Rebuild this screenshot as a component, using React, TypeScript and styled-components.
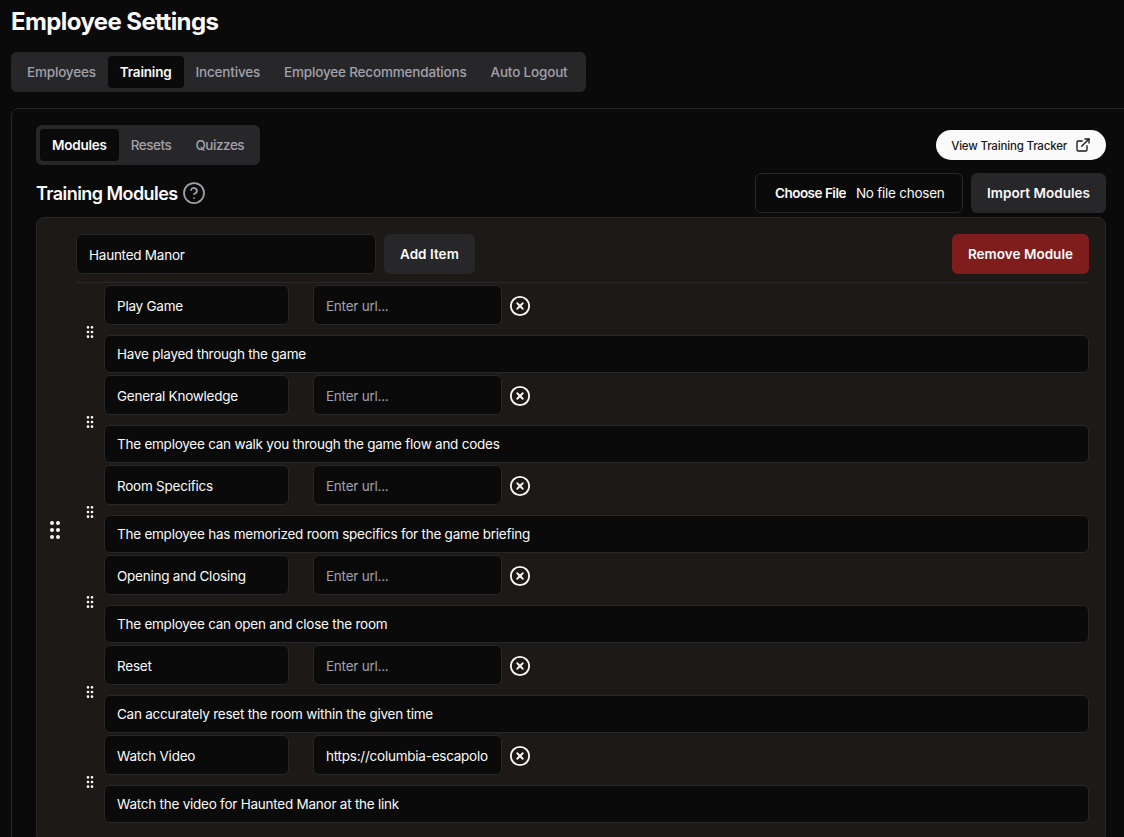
import React from 'react'
import styled, { createGlobalStyle } from 'styled-components'
import { CircleHelp, CircleX, ExternalLink, GripVertical } from 'lucide-react'

const GlobalStyle = createGlobalStyle`
  html, body {
    margin: 0;
    height: 837px;
    overflow: hidden;
    background: #0a0a0a;
  }
  * {
    box-sizing: border-box;
  }
  body {
    font-family: 'Inter', 'Liberation Sans', sans-serif;
    color: #fafafa;
    letter-spacing: -0.24px;
  }
  input, button {
    letter-spacing: inherit;
  }
`

const Page = styled.div`
  padding: 0 0 0 11px;
  width: 1124px;
  height: 837px;
  overflow: hidden;
`
const Title = styled.h1`
  margin: 0;
  height: 44px;
  display: flex;
  align-items: center;
  font-size: 24px;
  line-height: 32px;
  font-weight: 700;
  letter-spacing: -0.6px;
`
const TabBar = styled.div`
  display: inline-flex;
  align-items: center;
  height: 40px;
  padding: 4px;
  background: #27272a;
  border-radius: 6px;
`
const MainTabs = styled(TabBar)`
  margin: 8px 0 16px 0;
  padding-right: 7px;
  button {
    letter-spacing: -0.18px;
  }
`
const SubTabs = styled(TabBar)`
  button + button {
    letter-spacing: -0.45px;
  }
`
const Tab = styled.button<{ $active?: boolean }>`
  height: 32px;
  padding: 0 12px;
  border: 0;
  border-radius: 4px;
  font-family: inherit;
  font-size: 13.5px;
  font-weight: ${({ $active }) => ($active ? 600 : 500)};
  background: ${({ $active }) => ($active ? '#0a0a0a' : 'transparent')};
  color: ${({ $active }) => ($active ? '#fafafa' : '#a1a1aa')};
`
const Card = styled.section`
  width: 1140px;
  height: 800px;
  padding: 16px 0 0 24px;
  border: 1px solid #27272a;
  border-radius: 8px;
`
const Content = styled.div`
  width: 1070px;
`
const TopRow = styled.div`
  display: flex;
  justify-content: space-between;
  align-items: flex-start;
  height: 48px;
`
const TrackerLink = styled.a`
  display: flex;
  align-items: center;
  gap: 8px;
  height: 30px;
  margin-top: 5px;
  padding: 1px 15px 0;
  border-radius: 15px;
  background: #fafafa;
  color: #18181b;
  font-size: 11.5px;
  font-weight: 500;
  letter-spacing: -0.18px;
  svg {
    margin-top: -1px;
  }
`
const HeadRow = styled.div`
  display: flex;
  justify-content: space-between;
  align-items: center;
  height: 40px;
  margin-bottom: 4px;
`
const Heading = styled.h2`
  display: flex;
  align-items: center;
  gap: 4px;
  margin: 0;
  padding-top: 2px;
  font-size: 18px;
  font-weight: 600;
  line-height: 28px;
  letter-spacing: -0.55px;
  svg {
    margin-top: -2px;
    color: #a1a1aa;
  }
`
const ImportForm = styled.div`
  display: flex;
  gap: 8px;
`
const FileInput = styled.input`
  width: 208px;
  height: 40px;
  padding: 0 0 0 19px;
  background: #0a0a0a;
  border: 1px solid #27272a;
  border-radius: 6px;
  color: #fafafa;
  font-family: inherit;
  font-size: 13.5px;
  line-height: 38px;
  &::file-selector-button {
    margin-right: 10px;
    padding: 0;
    border: 0;
    background: transparent;
    color: #fafafa;
    font-family: inherit;
    font-size: 13.5px;
    font-weight: 600;
    letter-spacing: -0.5px;
  }
`
const Button = styled.button<{ $danger?: boolean }>`
  height: 40px;
  padding: 0 16px;
  border: 0;
  border-radius: 6px;
  background: ${({ $danger }) => ($danger ? '#7f1d1d' : '#27272a')};
  color: #fafafa;
  font-family: inherit;
  font-size: 13.5px;
  font-weight: 600;
  letter-spacing: 0.03px;
`
const ModuleBox = styled.div`
  display: flex;
  align-items: center;
  height: 626px;
  padding: 0 16px 0 6px;
  background: #1c1917;
  border: 1px solid #27272a;
  border-radius: 8px;
`
const ModuleHandle = styled.div`
  flex: none;
  width: 24px;
  margin-right: 9px;
  display: flex;
  color: #fafafa;
`
const ModuleBody = styled.div`
  flex: 1;
  min-width: 0;
  align-self: flex-start;
  padding-top: 16px;
`
const ModuleHeader = styled.div`
  display: flex;
  align-items: center;
  gap: 8px;
  padding-bottom: 8px;
  margin-bottom: 2px;
  border-bottom: 1px solid #27272a;
`
const Field = styled.input<{ $width?: number }>`
  width: ${({ $width }) => ($width ? `${$width}px` : '100%')};
  height: 40px;
  padding: 1px 12px 0;
  background: #0a0a0a;
  border: 1px solid #27272a;
  border-radius: 6px;
  color: #fafafa;
  font-family: inherit;
  font-size: 13.5px;
  outline: none;
  &::placeholder {
    color: #a1a1aa;
  }
`
const DescField = styled(Field)`
  height: 38px;
  padding-top: 0;
`
const Spacer = styled.div`
  flex: 1;
`
const ItemList = styled.div`
  display: flex;
  flex-direction: column;
  gap: 2px;
`
const Item = styled.div`
  display: flex;
  align-items: center;
`
const ItemHandle = styled.div`
  flex: none;
  width: 28px;
  margin-top: 6px;
  display: flex;
  justify-content: center;
  color: #fafafa;
`
const ItemBody = styled.div`
  flex: 1;
  min-width: 0;
  display: flex;
  flex-direction: column;
  gap: 10px;
`
const ItemTop = styled.div`
  display: flex;
  align-items: center;
  gap: 24px;
`
const RemoveWrap = styled.div`
  display: flex;
  align-items: center;
  margin: 1px 0 0 -17px;
  color: #fafafa;
`

const items = [
  { title: 'Play Game', url: '', desc: 'Have played through the game' },
  { title: 'General Knowledge', url: '', desc: 'The employee can walk you through the game flow and codes' },
  { title: 'Room Specifics', url: '', desc: 'The employee has memorized room specifics for the game briefing' },
  { title: 'Opening and Closing', url: '', desc: 'The employee can open and close the room' },
  { title: 'Reset', url: '', desc: 'Can accurately reset the room within the given time' },
  {
    title: 'Watch Video',
    url: 'https://columbia-escapolo',
    desc: 'Watch the video for Haunted Manor at the link',
  },
]

const App = (): React.JSX.Element => {
  return (
    <Page>
      <GlobalStyle />
      <Title>Employee Settings</Title>
      <MainTabs>
        <Tab>Employees</Tab>
        <Tab $active>Training</Tab>
        <Tab>Incentives</Tab>
        <Tab>Employee Recommendations</Tab>
        <Tab>Auto Logout</Tab>
      </MainTabs>
      <Card>
        <Content>
          <TopRow>
            <SubTabs>
              <Tab $active>Modules</Tab>
              <Tab>Resets</Tab>
              <Tab>Quizzes</Tab>
            </SubTabs>
            <TrackerLink>
              View Training Tracker
              <ExternalLink size={16} />
            </TrackerLink>
          </TopRow>
          <HeadRow>
            <Heading>
              Training Modules
              <CircleHelp size={24} strokeWidth={1.75} />
            </Heading>
            <ImportForm>
              <FileInput type="file" />
              <Button>Import Modules</Button>
            </ImportForm>
          </HeadRow>
          <ModuleBox>
            <ModuleHandle>
              <GripVertical size={24} />
            </ModuleHandle>
            <ModuleBody>
              <ModuleHeader>
                <Field $width={300} defaultValue="Haunted Manor" />
                <Button>Add Item</Button>
                <Spacer />
                <Button $danger>Remove Module</Button>
              </ModuleHeader>
              <ItemList>
                {items.map((item) => (
                  <Item key={item.title}>
                    <ItemHandle>
                      <GripVertical size={16} />
                    </ItemHandle>
                    <ItemBody>
                      <ItemTop>
                        <Field $width={185} defaultValue={item.title} />
                        <Field $width={189} defaultValue={item.url} placeholder="Enter url..." />
                        <RemoveWrap>
                          <CircleX size={22} />
                        </RemoveWrap>
                      </ItemTop>
                      <DescField defaultValue={item.desc} />
                    </ItemBody>
                  </Item>
                ))}
              </ItemList>
            </ModuleBody>
          </ModuleBox>
        </Content>
      </Card>
    </Page>
  )
}

export default App
